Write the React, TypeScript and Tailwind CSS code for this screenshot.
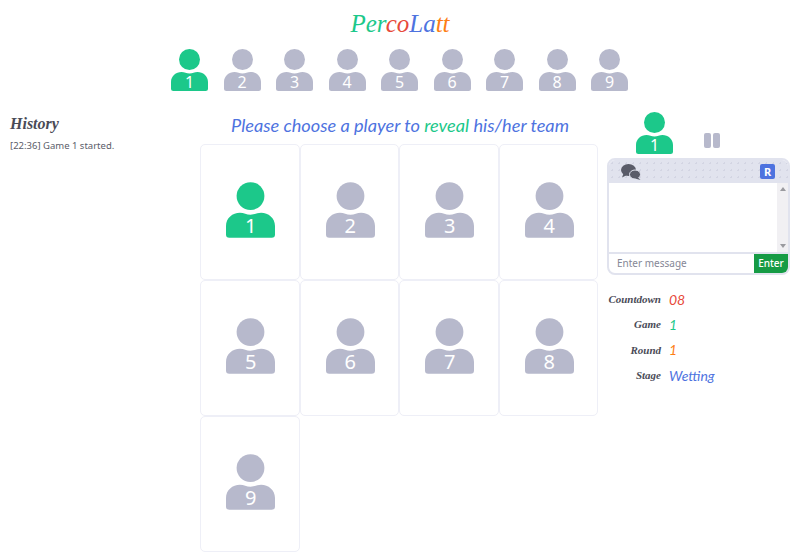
import React from "react";

const script = "[font-family:'Liberation_Serif',serif] italic";
const hand = "[font-family:'Lato',sans-serif] italic";

const Avatar = ({ n, active, big }: { n: number; active?: boolean; big?: boolean }) => (
  <div className={big ? "relative w-[49px] h-[56px]" : "relative w-[37px] h-[42px]"}>
    <svg viewBox="0 0 37 42" className="w-full h-full block" fill={active ? "#1cc88a" : "#b7b9cc"}>
      <circle cx="18.5" cy="10.5" r="10.5" />
      <path d="M0 33C0 27 5 23 10.500 23C13.500 23 15.500 24.500 18.500 24.500C21.500 24.500 23.500 23 26.500 23C32 23 37 27 37 33V39.500Q37 42 34.500 42H2.500Q0 42 0 39.500Z" />
    </svg>
    <span
      className={
        big
          ? "absolute left-0 right-0 bottom-[-3px] text-center text-white text-[20px] leading-[30px]"
          : "absolute left-0 right-0 bottom-[-3px] text-center text-white text-[16px] leading-[24px]"
      }
    >
      {n}
    </span>
  </div>
);

const stats = [
  { label: "Countdown", value: "08", color: "text-[#e74a3b]" },
  { label: "Game", value: "1", color: "text-[#1cc88a]" },
  { label: "Round", value: "1", color: "text-[#fd7e14]" },
  { label: "Stage", value: "Wetting", color: "text-[#4e73df]" },
];

const players = [1, 2, 3, 4, 5, 6, 7, 8, 9];

export default function App() {
  return (
    <div className="w-[800px] h-[559px] overflow-hidden bg-white text-[#5a5c69] font-['Noto_Sans',sans-serif]">
      <h1 className={`${script} h-[49px] pt-[4px] text-center text-[25px] leading-[40px]`}>
        <span className="text-[#1cc88a]">Per</span>
        <span className="text-[#e74a3b]">co</span>
        <span className="text-[#4e73df]">La</span>
        <span className="text-[#fd7e14]">tt</span>
      </h1>

      <div className="flex justify-center gap-[15.5px] h-[44px] pr-[1px]">
        {players.map((n) => (
          <Avatar key={n} n={n} active={n === 1} />
        ))}
      </div>

      <div className="flex mt-[16px]">
        <aside className="w-[200px] pl-[10px] pt-[3px]">
          <h2 className={`${script} font-bold text-[16px] leading-[24px] text-[#4a4b57]`}>History</h2>
          <p className="mt-[3px] text-[9.500px] leading-[14px]">[22:36] Game 1 started.</p>
        </aside>

        <main className="w-[400px]">
          <p className={`${hand} h-[35px] pt-[1px] text-center text-[18.200px] leading-[30px] text-[#4e73df] whitespace-nowrap`}>
            Please choose a player to <span className="text-[#1cc88a]">reveal</span> his/her team
          </p>
          <div className="grid grid-cols-[99.500px_99.500px_99.500px_99.500px] gap-y-[0.5px]">
            {players.map((n) => (
              <div
                key={n}
                className="h-[135.500px] pb-[3px] pl-[2px] flex items-center justify-center rounded-[5px] border border-[#eeeff7]"
              >
                <Avatar n={n} active={n === 1} big />
              </div>
            ))}
          </div>
        </main>

        <aside className="w-[200px] pl-[7px] pr-[10px]">
          <div className="flex items-end h-[47px] -mt-[2px] pl-[29px]">
            <Avatar n={1} active />
            <div className="flex gap-[2px] ml-[31px] mb-[6px]">
              <span className="w-[7px] h-[15px] rounded-[2px] bg-[#b7b9cc]" />
              <span className="w-[7px] h-[15px] rounded-[2px] bg-[#b7b9cc]" />
            </div>
          </div>

          <div className="mt-[4px] h-[117px] flex flex-col rounded-[8px] border-2 border-[#e1e3ee] overflow-hidden">
            <div className="h-[23px] shrink-0 flex items-center justify-between pl-[12px] pr-[13px] bg-[#e1e3ee] bg-[radial-gradient(#d3d5e3_1px,transparent_1px)] bg-[length:7px_7px]">
              <svg viewBox="0 0 20 16" className="w-[20px] h-[16px]" fill="#5a5c69">
                <ellipse cx="7.500" cy="6" rx="7.500" ry="6" />
                <path d="M2.500 9.500L1 13.500L6 11Z" />
                <ellipse cx="14" cy="10.500" rx="5.500" ry="4.500" stroke="#e1e3ee" strokeWidth="1" />
                <path d="M17 13.500L19.500 16L14 14.500Z" />
              </svg>
              <span className="w-[15px] h-[15px] rounded-[2px] bg-[#4e73df] text-white text-[11px] leading-[15px] text-center font-bold">
                R
              </span>
            </div>
            <div className="flex-1 flex justify-end border-b-2 border-[#e1e3ee]">
              <div className="w-[11px] bg-[#f1f0f3] flex flex-col items-center justify-between py-[4px]">
                <span className="w-0 h-0 border-x-[3px] border-x-transparent border-b-[4px] border-b-[#9a9a9f]" />
                <span className="w-0 h-0 border-x-[3px] border-x-transparent border-t-[4px] border-t-[#9a9a9f]" />
              </div>
            </div>
            <div className="h-[19px] shrink-0 flex">
              <span className="flex-1 pl-[8px] text-[10px] leading-[19px] text-[#858796]">Enter message</span>
              <span className="w-[34px] bg-[#169b45] text-white text-[10px] leading-[19px] text-center font-medium">
                Enter
              </span>
            </div>
          </div>

          <div className="mt-[14.500px] flex flex-col gap-[5.200px]">
            {stats.map((s) => (
              <div key={s.label} className="flex items-center h-[20px]">
                <span className={`${script} w-[54px] text-right font-bold text-[11px] text-[#4a4b57] whitespace-nowrap`}>
                  {s.label}
                </span>
                <span className={`${hand} ml-[8px] text-[14px] ${s.color}`}>{s.value}</span>
              </div>
            ))}
          </div>
        </aside>
      </div>
    </div>
  );
}
